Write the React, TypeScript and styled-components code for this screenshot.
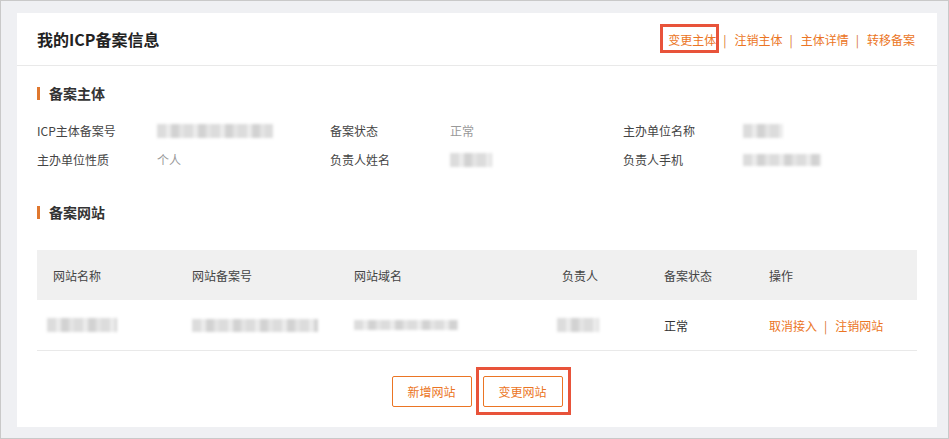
import React from 'react'
import styled, { createGlobalStyle } from 'styled-components'

const orange = '#eb7524'

const GlobalStyle = createGlobalStyle`
  body {
    margin: 0;
    font-family: "Noto Sans CJK SC", "Noto Sans", sans-serif;
    color: #333;
  }
`

const headerLinks = ['变更主体', '注销主体', '主体详情', '转移备案']

const infoRows = [
  [
    { label: 'ICP主体备案号', blur: [116, 14] },
    { label: '备案状态', text: '正常' },
    { label: '主办单位名称', blur: [40, 14] },
  ],
  [
    { label: '主办单位性质', text: '个人' },
    { label: '负责人姓名', blur: [42, 14] },
    { label: '负责人手机', blur: [78, 12] },
  ],
]

const columns = ['网站名称', '网站备案号', '网站域名', '负责人', '备案状态', '操作']

const App = () => {
  return (
    <>
      <GlobalStyle />
      <Frame>
        <Card>
          <Header>
            <Title>我的ICP备案信息</Title>
            <Links>
              {headerLinks.map((l, i) => (
                <React.Fragment key={l}>
                  {i > 0 && <Sep>|</Sep>}
                  {i === 0 ? (
                    <Marked $inset="-7px -3px -5px -8px">
                      <Link>{l}</Link>
                    </Marked>
                  ) : (
                    <Link>{l}</Link>
                  )}
                </React.Fragment>
              ))}
            </Links>
          </Header>
          <Body>
            <SectionTitle>备案主体</SectionTitle>
            <InfoGrid>
              {infoRows.flat().map((it) => (
                <InfoItem key={it.label}>
                  <Label>{it.label}</Label>
                  {it.text ? (
                    <Value>{it.text}</Value>
                  ) : (
                    <Blur $w={it.blur![0]} $h={it.blur![1]} />
                  )}
                </InfoItem>
              ))}
            </InfoGrid>

            <SectionTitle $gap>备案网站</SectionTitle>
            <Table>
              <HeadRow>
                {columns.map((c) => (
                  <Cell key={c}>{c}</Cell>
                ))}
              </HeadRow>
              <Row>
                <Cell $shift={-6}>
                  <Blur $w={70} $h={14} />
                </Cell>
                <Cell>
                  <Blur $w={126} $h={13} />
                </Cell>
                <Cell>
                  <Blur $w={104} $h={10} />
                </Cell>
                <Cell $shift={-5}>
                  <Blur $w={42} $h={14} />
                </Cell>
                <Cell>正常</Cell>
                <Cell>
                  <Link>取消接入</Link>
                  <Sep>|</Sep>
                  <Link>注销网站</Link>
                </Cell>
              </Row>
            </Table>

            <Actions>
              <Button>新增网站</Button>
              <Marked $inset="-9px -8px -8px -7px">
                <Button>变更网站</Button>
              </Marked>
            </Actions>
          </Body>
        </Card>
      </Frame>
    </>
  )
}

export default App

const Frame = styled.div`
  width: 949px;
  height: 439px;
  box-sizing: border-box;
  border: 1px solid #c9c9c9;
  background: #eff0f3;
  padding: 12px 11px 0 16px;
`

const Card = styled.div`
  width: 920px;
  background: #fff;
`

const Header = styled.div`
  height: 53px;
  box-sizing: border-box;
  border-bottom: 1px solid #e9e9e9;
  padding: 0 20px;
  display: flex;
  align-items: center;
  justify-content: space-between;
`

const Title = styled.div`
  font-size: 16px;
  font-weight: 700;
  color: #222;
`

const Links = styled.div`
  display: flex;
  align-items: center;
  font-size: 12px;
  padding-right: 2px;
`

const Link = styled.span`
  color: ${orange};
  font-size: 12px;
  cursor: pointer;
`

const Sep = styled.span`
  color: #d9742c;
  font-size: 12px;
  margin: 0 8px 0 7px;
`

const Marked = styled.span<{ $inset: string }>`
  position: relative;
  display: inline-flex;

  &::after {
    content: '';
    position: absolute;
    inset: ${(p) => p.$inset};
    border: 3px solid #e8533a;
    pointer-events: none;
  }
`

const Body = styled.div`
  padding: 17px 20px 20px;
`

const SectionTitle = styled.div<{ $gap?: boolean }>`
  height: 20px;
  display: flex;
  align-items: center;
  font-size: 14px;
  font-weight: 700;
  color: #333;
  margin-top: ${(p) => (p.$gap ? '28px' : '0')};

  &::before {
    content: '';
    width: 3px;
    height: 13px;
    background: #e0782f;
    margin-right: 9px;
  }
`

const InfoGrid = styled.div`
  margin-top: 13px;
  display: grid;
  grid-template-columns: 293px 293px 1fr;
  grid-auto-rows: 29px;
`

const InfoItem = styled.div`
  display: flex;
  align-items: center;
  font-size: 12px;
`

const Label = styled.span`
  width: 120px;
  flex: none;
  color: #444;
`

const Value = styled.span`
  color: #999;
`

const Blur = styled.span<{ $w: number; $h: number }>`
  display: inline-block;
  width: ${(p) => p.$w}px;
  height: ${(p) => p.$h}px;
  background: repeating-linear-gradient(
    90deg,
    #dcdcdc 0 9px,
    #ececec 9px 14px,
    #d2d2d2 14px 22px,
    #e4e4e4 22px 27px
  );
  filter: blur(1.6px);
`

const Table = styled.div`
  margin-top: 28px;
`

const HeadRow = styled.div`
  display: grid;
  grid-template-columns: 139px 162px 208px 102px 105px 1fr;
  height: 50px;
  background: #f0f0f0;
  align-items: center;
  font-size: 12px;
  color: #444;
`

const Row = styled(HeadRow)`
  height: 51px;
  box-sizing: border-box;
  background: #fff;
  border-bottom: 1px solid #e9e9e9;
  color: #333;
`

const Cell = styled.div<{ $shift?: number }>`
  padding-left: ${(p) => 16 + (p.$shift ?? 0)}px;
  display: flex;
  align-items: center;
`

const Actions = styled.div`
  margin-top: 25px;
  display: flex;
  justify-content: center;
  gap: 11px;
`

const Button = styled.button`
  width: 80px;
  height: 31px;
  box-sizing: border-box;
  border: 1px solid ${orange};
  border-radius: 2px;
  background: #fff;
  color: ${orange};
  font-family: inherit;
  font-size: 12px;
  cursor: pointer;
`
